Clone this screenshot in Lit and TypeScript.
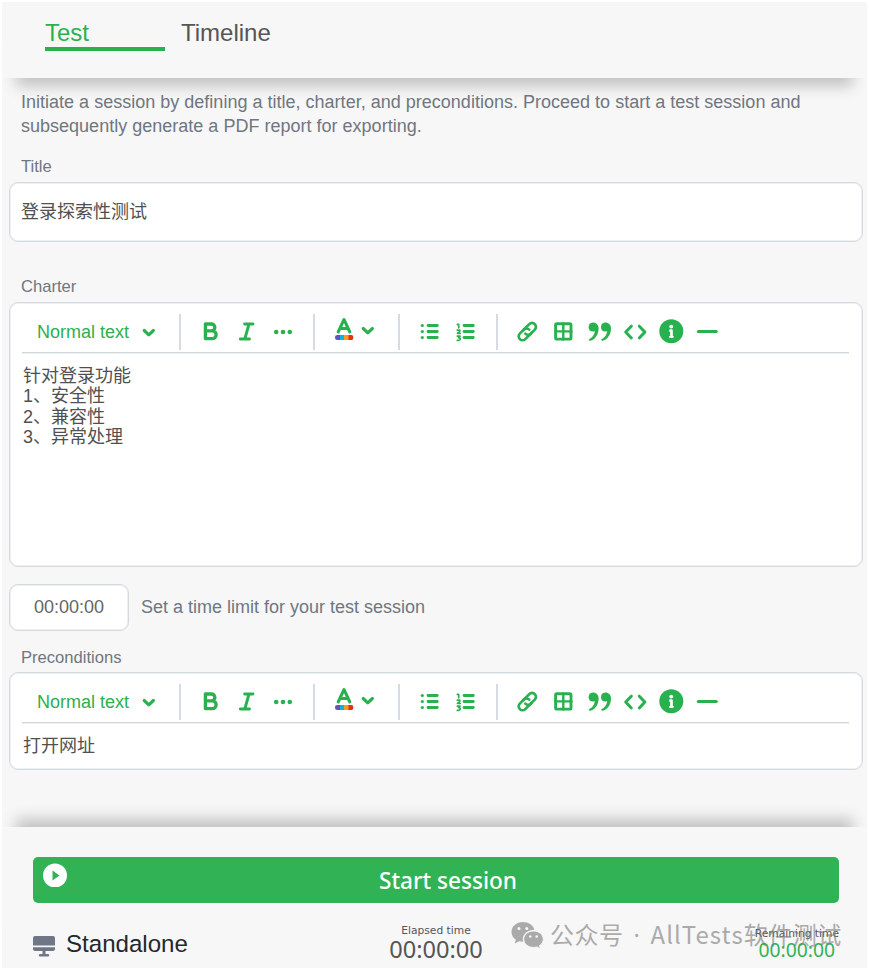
import { LitElement, html, css, svg, SVGTemplateResult } from "lit";
import { customElement, property } from "lit/decorators.js";

const glyphs: Record<string, SVGTemplateResult> = {
  bold: svg`<path d="M6.400 5h6a3.400 3.400 0 0 1 0 6.900h-6zM6.400 11.900h6.900a3.700 3.700 0 0 1 0 7.700H6.400z" stroke-width="3.300"/>`,
  italic: svg`<path d="M9.600 5H18M5.300 20h9.200M14 5 9.800 20" stroke-width="2.900"/>`,
  more: svg`<g fill="currentColor" stroke="none"><circle cx="5.200" cy="13" r="2.300"/><circle cx="12" cy="13" r="2.300"/><circle cx="18.800" cy="13" r="2.300"/></g>`,
  color: svg`<path d="M6.200 14 12 1.500 17.800 14M8.200 10.500h7.600" stroke-width="3"/>
    <g stroke="none"><rect x="3" y="17" width="18" height="5" rx="2.200" fill="#6554c0"/><rect x="8" y="17" width="5" height="5" fill="#00b8d9"/><rect x="12" y="17" width="5" height="5" fill="#ff991f"/><path fill="#de350b" d="M16.500 17h2.300a2.500 2.500 0 0 1 0 5h-2.300z"/></g>`,
  chevron: svg`<path d="m7.200 10.500 4.600 4.300 4.600-4.300" stroke-width="3.100"/>`,
  bullets: svg`<path d="M10 6.500h9.300M10 12.500h9.300M10 18.500h9.300" stroke-width="2.800"/><g fill="currentColor" stroke="none"><circle cx="4.300" cy="6.500" r="1.600"/><circle cx="4.300" cy="12.500" r="1.600"/><circle cx="4.300" cy="18.500" r="1.600"/></g>`,
  numbers: svg`<path d="M10 6.500h9.300M10 12.500h9.300M10 18.500h9.300" stroke-width="2.800"/><path d="M3.300 5.300h1.400v3.400M3.300 11.200h2.500v1.200L3.400 14.300h2.800M3.300 17.100h2.800l-1.500 1.500c2.500 0 2 2.800-.1 2.800H3.300" stroke-width="1.700"/>`,
  link: svg`<g transform="translate(-.7 .6) rotate(-45 12 12)" stroke-width="2.700"><path d="M13.700 15.900H4.700a3.900 3.900 0 0 1 0-7.800h5.600a3.900 3.900 0 0 1 3.900 3.900" transform="translate(.6 0)"/><path d="M10.300 8.100h9a3.900 3.900 0 0 1 0 7.800h-5.600a3.900 3.900 0 0 1-3.900-3.900" transform="translate(-.6 0)"/></g>`,
  table: svg`<rect x="3.600" y="4.700" width="15.400" height="15.400" rx="1.400" stroke-width="2.900"/><path d="M11.300 4.500v16M3.500 12.400h16" stroke-width="2.400"/>`,
  quote: svg`<g fill="currentColor" stroke="none" transform="translate(-.4 .6)"><path d="M5.300 3A4.700 4.700 0 0 0 1 7.600c0 2.500 1.800 4.400 4.100 4.400.8 0 1.500-.2 2.100-.6-.4 4-2.500 6.700-5.400 8.100-1 .5-.5 2 .7 1.700 5.100-1.300 8.500-6.400 8.500-12.300C11 5.200 8.600 3 5.300 3z"/><path d="M17.700 3a4.700 4.700 0 0 0-4.300 4.600c0 2.500 1.800 4.400 4.100 4.400.8 0 1.500-.2 2.100-.6-.4 4-2.500 6.700-5.400 8.100-1 .5-.5 2 .7 1.700 5.100-1.300 8.500-6.400 8.500-12.300C23.400 5.200 21 3 17.700 3z"/></g>`,
  code: svg`<path d="M7.300 7.200 1.700 13l5.600 6M15.300 7.200l5.600 5.800-5.600 6" stroke-width="3"/>`,
  info: svg`<circle cx="11.300" cy="12.300" r="12" fill="currentColor" stroke="none"/><circle cx="11.200" cy="7.600" r="1.900" fill="#fff" stroke="none"/><path d="M10.400 11.700h1.100v5.800" stroke="#fff" stroke-width="2.700"/><path d="M9.800 17.800h3.200" stroke="#fff" stroke-width="1.700"/>`,
  rule: svg`<path d="M2.300 12.500h18" stroke-width="3"/>`,
};

const icon = (name: string, cls = "icon") => html`<svg class=${cls} viewBox="0 0 24 24" fill="none" stroke="currentColor" stroke-linecap="round" stroke-linejoin="round">${glyphs[name]}</svg>`;

@customElement("rich-editor")
export class RichEditor extends LitElement {
  @property({ attribute: false }) lines: string[] = [];

  static styles = css`
    :host { display: block; box-sizing: border-box; background: #fff; border: 1px solid #d4d9df; box-shadow: inset 0 0 0 1px #eef1f4; border-radius: 9px; padding: 0 13px 0 12px; color: #505050; }
    .bar { display: flex; align-items: center; height: 49px; border-bottom: 1px solid #d0d6dc; box-shadow: 0 1px #eef1f3; color: #2ab14f; }
    .style { font-size: 18px; width: 92px; margin: 9px 0 0 15px; white-space: nowrap; }
    svg { display: block; flex: none; overflow: visible; }
    .icon { width: 24px; height: 24px; margin: 7px 6px 0; }
    .drop { width: 24px; height: 24px; margin: 8px 18px 0 8px; }
    .small { width: 24px; height: 24px; margin: 4px 18px 0 -6px; }
    .glyph { width: 24px; height: 24px; margin: 5px 6px 0 17px; }
    .sep { width: 2px; height: 36px; background: #d6dbe3; margin-top: 9px; }
    .group { display: flex; padding: 0 12px; }
    .text { padding: 13px 0 0 1px; font-size: 18px; line-height: 20.4px; white-space: pre; }
  `;

  render() {
    return html`
      <div class="bar">
        <span class="style">Normal text</span>${icon("chevron", "drop")}
        <i class="sep"></i>
        <div class="group">${["bold", "italic", "more"].map((n) => icon(n))}</div>
        <i class="sep"></i>
        ${icon("color", "glyph")}${icon("chevron", "small")}
        <i class="sep"></i>
        <div class="group">${["bullets", "numbers"].map((n) => icon(n))}</div>
        <i class="sep"></i>
        <div class="group">${["link", "table", "quote", "code", "info", "rule"].map((n) => icon(n))}</div>
      </div>
      <div class="text">${this.lines.map((l) => html`<div>${l}</div>`)}</div>
    `;
  }
}

@customElement("app-root")
export class AppRoot extends LitElement {
  static styles = css`
    :host { display: block; box-sizing: border-box; height: 970px; padding: 2px; background: #fff; font-family: "Liberation Sans", "Noto Sans CJK SC", sans-serif; overflow: hidden; }
    .panel { display: flex; flex-direction: column; height: 966px; background: #f7f7f7; position: relative; }
    header { box-sizing: border-box; display: flex; gap: 16px; height: 76px; flex: none; padding: 17px 43px 0; background: #f7f7f7; box-shadow: 0 22px 14px -14px rgba(0, 0, 0, 0.22); font-size: 24px; line-height: 28px; color: #555; }
    .tab { height: 28px; }
    .tab.on { width: 120px; color: #2ab14f; border-bottom: 4px solid #2ab14f; }
    main { flex: 1; padding: 0 4px 0 7px; color: #6f7680; font-size: 18px; position: relative; }
    .intro { margin: 0; padding: 12px 0 0 12px; line-height: 24px; white-space: nowrap; letter-spacing: 0.01px; }
    .label { display: block; font-size: 16.6px; line-height: 20px; padding-left: 12px; }
    .title { box-sizing: border-box; height: 60px; margin-top: 5px; background: #fff; border: 1px solid #d4d9df; box-shadow: inset 0 0 0 1px #eef1f4; border-radius: 9px; padding: 0 11px; line-height: 58px; color: #505050; }
    .l1 { margin-top: 19px; }
    .l2 { margin-top: 35px; }
    .l3 { margin-top: 17px; }
    .charter { height: 265px; margin-top: 5px; }
    .pre { height: 98px; margin-top: 4px; }
    .limit { display: flex; align-items: center; gap: 12px; margin-top: 17px; }
    .time { box-sizing: border-box; width: 120px; height: 47px; background: #fff; border: 1px solid #d4d9df; box-shadow: inset 0 0 0 1px #eef1f4; border-radius: 9px; text-align: center; line-height: 45px; color: #666; }
    footer { box-sizing: border-box; flex: none; height: 141px; padding: 30px 28px 0 31px; background: #f7f7f7; box-shadow: 0 -22px 14px -14px rgba(0, 0, 0, 0.22); position: relative; }
    .start { display: flex; align-items: center; justify-content: center; box-sizing: border-box; padding: 2px 0 0 24px; height: 46px; border-radius: 5px; background: #31b355; color: #fff; font: 500 22.6px/44px "Noto Sans", sans-serif; position: relative; }
    .play { position: absolute; left: 10px; top: 6px; width: 24px; height: 24px; }
    .status { display: grid; grid-template-columns: 356px 94px 1fr; }
    .mode { display: flex; align-items: center; gap: 11px; height: 60px; padding-top: 11px; font-size: 24.1px; color: #24272c; }
    .mode svg { width: 22px; height: 21px; margin-top: 4px; }
    .clock { display: flex; flex-direction: column; align-items: center; padding-top: 21px; color: #555; white-space: nowrap; }
    .clock small { font: 10.7px/13px "DejaVu Sans", sans-serif; }
    .clock b { font: 23.6px/25px "Noto Sans", sans-serif; }
    .remaining { align-items: flex-end; padding-top: 24px; }
    .clock.remaining b { color: #31b355; font-size: 19.3px; line-height: 20px; margin-right: 4px; }
    .mark { position: absolute; left: 509px; top: 90px; display: flex; align-items: center; height: 36px; color: #777; opacity: 0.6; font: 24px/36px "Noto Sans CJK SC", sans-serif; white-space: nowrap; }
    .mark svg { width: 33px; height: 28px; margin-right: 6px; }
    .mark > span { margin-top: -2px; letter-spacing: 0.5px; }
    .dot { display: inline-block; width: 27px; text-align: center; font-family: "Noto Sans", sans-serif; }
    .latin { letter-spacing: 1.05px; }
  `;

  render() {
    return html`
      <div class="panel">
        <header><div class="tab on">Test</div><div class="tab">Timeline</div></header>
        <main>
          <p class="intro">Initiate a session by defining a title, charter, and preconditions. Proceed to start a test session and<br />subsequently generate a PDF report for exporting.</p>
          <span class="label l1">Title</span>
          <div class="title">登录探索性测试</div>
          <span class="label l2">Charter</span>
          <rich-editor class="charter" .lines=${["针对登录功能", "1、安全性", "2、兼容性", "3、异常处理"]}></rich-editor>
          <div class="limit"><div class="time">00:00:00</div><span>Set a time limit for your test session</span></div>
          <span class="label l3">Preconditions</span>
          <rich-editor class="pre" .lines=${["打开网址"]}></rich-editor>
        </main>
        <footer>
          <div class="start">
            <svg class="play" viewBox="0 0 24 24"><circle cx="12" cy="12.500" r="12" fill="#fff"/><path d="m9.500 7.500 7 5-7 5z" fill="#31b355"/></svg>
            <span>Start session</span>
          </div>
          <div class="status">
            <div class="mode">
              <svg viewBox="0 0 22 21" fill="#6f7787"><path d="M2 0h18a2 2 0 0 1 2 2v7.500H0V2a2 2 0 0 1 2-2zM0 11.300h22v1.700a2 2 0 0 1-2 2h-7.500v3h2.500a1.200 1.200 0 0 1 0 2.500H7A1.200 1.200 0 0 1 7 18h2.500v-3H2a2 2 0 0 1-2-2z"/></svg>
              <span>Standalone</span>
            </div>
            <div class="clock"><small>Elapsed time</small><b>00:00:00</b></div>
            <div class="clock remaining"><small>Remaining time</small><b>00:00:00</b></div>
          </div>
          <div class="mark">
            <svg viewBox="0 0 33 28"><path fill="currentColor" d="M12 1C5.400 1 .5 5.400.5 11c0 3.200 1.700 5.900 4.400 7.800L3.700 22.500l4.500-2.200c1.200.3 2.500.5 3.800.5-1.600-6.600 4-12 11.400-12C22 4 17.500 1 12 1z"/><path fill="currentColor" stroke="#f7f7f7" stroke-width="1" d="M22.500 10c-5.600 0-9.800 3.700-9.800 8.200s4.200 8.200 9.800 8.200c1.200 0 2.300-.2 3.300-.5l3.700 1.900-1-3.200c2.500-1.500 3.800-3.800 3.800-6.400 0-4.500-4.200-8.200-9.800-8.200z"/><g fill="#f7f7f7"><circle cx="8" cy="7.500" r="1.500"/><circle cx="15.800" cy="7.500" r="1.500"/><circle cx="19.300" cy="15.500" r="1.300"/><circle cx="25.700" cy="15.500" r="1.300"/></g></svg>
            <span>公众号<span class="dot">·</span><span class="latin">AllTests</span>软件测试</span>
          </div>
        </footer>
      </div>
    `;
  }
}
